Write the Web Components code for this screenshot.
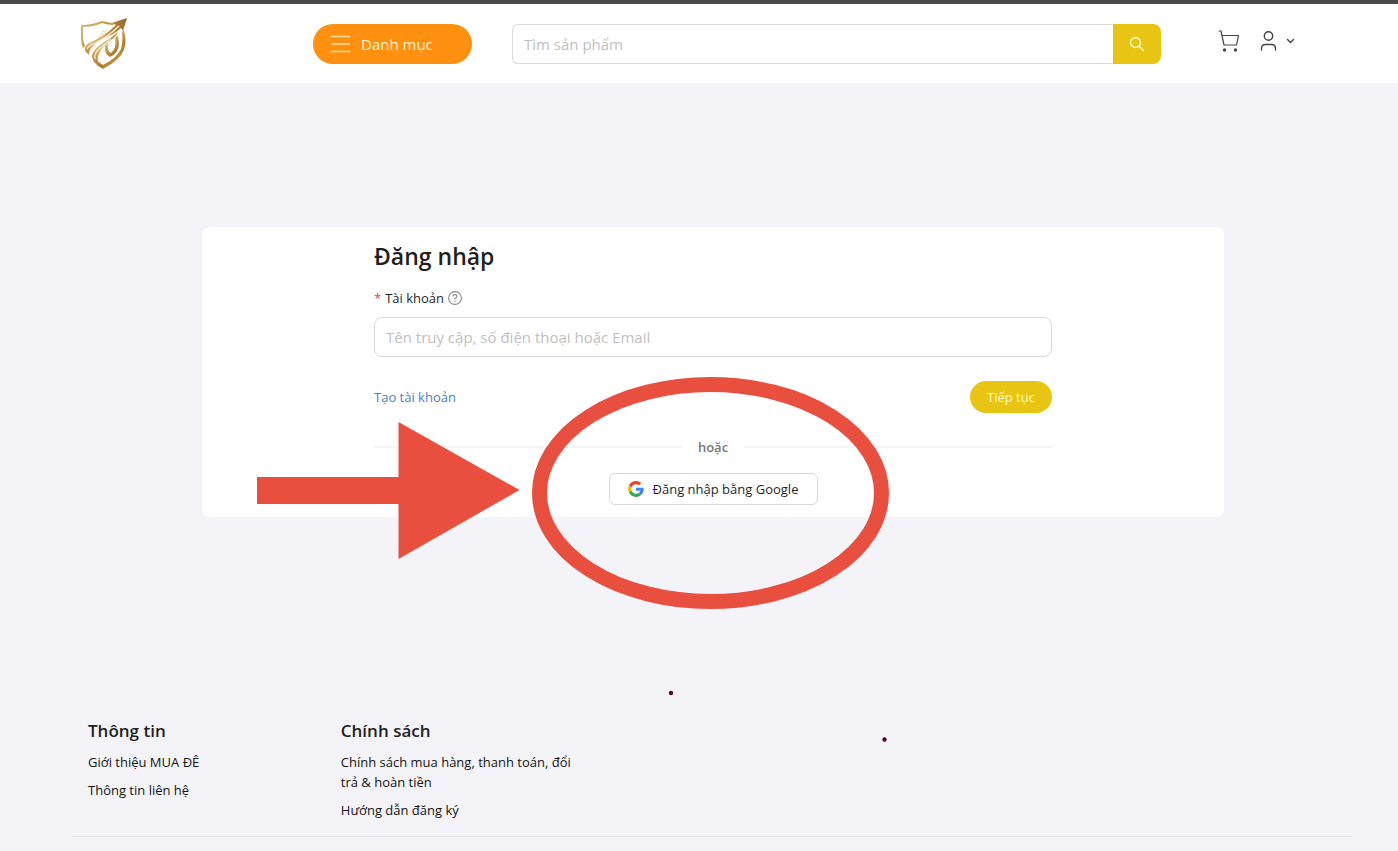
<!DOCTYPE html>
<html lang="vi">
<head>
  <meta charset="utf-8">
  <meta name="viewport" content="width=device-width, initial-scale=1">
  <title>Đăng nhập</title>
  <style>
    * { box-sizing: border-box; }
    body {
      --text: #1f1f1f;
      --border: #d9d9d9;
      --yellow: #e8c512;
      --mark: #e94f3f;
      margin: 0;
      min-height: 100vh;
      position: relative;
      overflow-x: hidden;
      display: flex;
      flex-direction: column;
      background: #f3f3f8;
      color: var(--text);
      font: 13px/20px "Open Sans", "Noto Sans", sans-serif;
    }
    main {
      padding: 144px 44px 0 72px;
      flex: 1;
    }
  </style>
</head>
<body>
  <shop-header></shop-header>
  <main>
    <login-card></login-card>
  </main>
  <shop-footer>
    <footer-column heading="Thông tin">
      <a href="#">Giới thiệu MUA ĐÊ</a>
      <a href="#">Thông tin liên hệ</a>
    </footer-column>
    <footer-column heading="Chính sách">
      <a href="#">Chính sách mua hàng, thanh toán, đổi trả &amp; hoàn tiền</a>
      <a href="#">Hướng dẫn đăng ký</a>
    </footer-column>
  </shop-footer>
  <guide-marks></guide-marks>

  <script>
    class ShopLogo extends HTMLElement {
      constructor() {
        super();
        const shadowRoot = this.attachShadow({ mode: 'open' });
        shadowRoot.innerHTML = `
          <style>
          :host { display: block; width: 48px; height: 54px; }
          svg { display: block; }
          </style>
          <svg width="48" height="54" viewBox="0 0 48 54" aria-hidden="true">
            <defs>
              <linearGradient id="gold" gradientUnits="userSpaceOnUse" x1="0" y1="8" x2="40" y2="50">
                <stop offset="0" stop-color="#d9bd80"/>
                <stop offset=".3" stop-color="#c4943f"/>
                <stop offset=".5" stop-color="#e2c486"/>
                <stop offset=".75" stop-color="#b07c2a"/>
                <stop offset="1" stop-color="#cfa458"/>
              </linearGradient>
              <linearGradient id="shaft" gradientUnits="userSpaceOnUse" x1="6" y1="44" x2="46" y2="2">
                <stop offset="0" stop-color="#a8752a"/>
                <stop offset=".3" stop-color="#dfbb70"/>
                <stop offset=".6" stop-color="#c59a4c"/>
                <stop offset="1" stop-color="#946420"/>
              </linearGradient>
            </defs>
            <g fill="url(#gold)">
              <path d="M1 8 Q12 8 22 4 Q29 6 36 6 L33 8 Q27 8 22 6 Q13 10 3 10 L3 21 Q3 25 5 29 L3 31 Q1 26 1 20Z"/>
              <path d="M42 15 L44 13 Q47 24 44 33 Q40 43 23 52 Q17 49 13 44 L15 41 Q19 46 23 48 Q37 41 41 32 Q43 25 42 15Z"/>
              <path d="M28 26 L25 29 Q24 37 30 40 Q39 36 39 26 L38 18 L35 21 Q37 31 31 36 Q27 34 28 26Z"/>
            </g>
            <g fill="url(#shaft)">
              <path d="M47 1 L43 14 L41 11 Q35 17 27 20 Q16 25 13 29 Q9 33 9 38 L5 34 Q4 28 11 25 Q22 21 36 8 L32 6Z"/>
              <path d="M38 15 Q30 22 23 26 Q13 32 12 39 Q12 44 19 48 Q16 41 20 35 Q22 30 29 25 Q36 20 38 15Z"/>
            </g>
            <path d="M7 32 Q9 28 15 26 Q28 20 39 9 M15 42 Q14 36 20 31 Q25 27 31 22" fill="none" stroke="#f9efcf" stroke-width="1.2"/>
            <path d="M22 14 h5 M20 17 h6 M18 20 h5" stroke="#e5d19e" stroke-width="1"/>
          </svg>
          `
      }
    }

    class SearchBox extends HTMLElement {
      constructor() {
        super();
        const shadowRoot = this.attachShadow({ mode: 'open' });
        shadowRoot.innerHTML = `
          <style>
          * { box-sizing: border-box; }
          :host { display: block; }
          form { display: flex; height: 40px; }
          input {
            flex: 1;
            min-width: 0;
            padding: 0 11px;
            border: 1px solid var(--border);
            border-right: 0;
            border-radius: 6px 0 0 6px;
            background: #fff;
            color: var(--text);
            font: inherit;
            font-size: 15px;
            outline: none;
          }
          input::placeholder { color: #bfbfbf; opacity: 1; }
          button {
            width: 48px;
            padding: 0;
            display: grid;
            place-items: center;
            border: 0;
            border-radius: 0 8px 8px 0;
            background: var(--yellow);
            cursor: pointer;
          }
          </style>
          <form>
            <input type="search" aria-label="Tìm sản phẩm" placeholder="Tìm sản phẩm">
            <button type="button" aria-label="Tìm">
              <svg width="16" height="16" viewBox="0 0 16 16" fill="none" stroke="#fffbd0" stroke-width="1.3" stroke-linecap="round" aria-hidden="true">
                <circle cx="6.5" cy="6.5" r="5"/>
                <path d="M10.3 10.3 L14.5 14.5"/>
              </svg>
            </button>
          </form>
          `
      }
    }

    class ShopHeader extends HTMLElement {
      constructor() {
        super();
        const shadowRoot = this.attachShadow({ mode: 'open' });
        shadowRoot.innerHTML = `
          <style>
          * { box-sizing: border-box; }
          :host { display: block; background: #fff; border-top: 4px solid #4a484a; }
          header {
            display: flex;
            align-items: center;
            min-height: 79px;
            padding: 0 103px 0 80px;
          }
          .category {
            display: flex;
            align-items: center;
            gap: 10px;
            width: 159px;
            height: 40px;
            margin: 0 40px 0 185px;
            padding: 0 18px;
            border: 0;
            border-radius: 20px;
            background: #ff9010;
            color: #fff3d0;
            font: inherit;
            font-size: 15px;
            cursor: pointer;
          }
          search-box { flex: 1; }
          nav { display: flex; align-items: center; gap: 20px; margin: -6px 0 0 57px; }
          nav a { display: flex; align-items: center; gap: 8px; color: #444; }
          </style>
          <header>
            <shop-logo></shop-logo>
            <button class="category" type="button">
              <svg width="20" height="18" viewBox="0 0 20 18" stroke="#ffdf9c" stroke-width="1.4" aria-hidden="true">
                <path d="M0 1.5 H19 M0 9 H19 M0 16.5 H19"/>
              </svg>
              Danh mục
            </button>
            <search-box></search-box>
            <nav>
              <a href="#" aria-label="Giỏ hàng">
                <svg width="22" height="22" viewBox="0 0 22 22" fill="none" stroke="currentColor" stroke-width="1.2" stroke-linecap="round" stroke-linejoin="round" aria-hidden="true">
                  <path d="M1 1 H3 L6 15 H18.5 L20.5 5.5 H4"/>
                  <circle cx="6.5" cy="20" r="1.1" fill="currentColor"/>
                  <circle cx="17.5" cy="20" r="1.1" fill="currentColor"/>
                </svg>
              </a>
              <a href="#" aria-label="Tài khoản">
                <svg width="18" height="20" viewBox="0 0 18 20" fill="none" stroke="currentColor" stroke-width="1.4" stroke-linecap="round" aria-hidden="true">
                  <circle cx="8.5" cy="5" r="4.2"/>
                  <path d="M1.5 19 V17.5 Q1.5 13.5 5.5 13.5 H11.5 Q15.5 13.5 15.5 17.5 V19"/>
                </svg>
                <svg width="9" height="6" viewBox="0 0 9 6" fill="none" stroke="currentColor" stroke-width="1.4" stroke-linecap="round" aria-hidden="true">
                  <path d="M1.5 1.5 L4.5 4.5 L7.5 1.5"/>
                </svg>
              </a>
            </nav>
          </header>
          `
      }
    }

    class LoginCard extends HTMLElement {
      constructor() {
        super();
        const shadowRoot = this.attachShadow({ mode: 'open' });
        shadowRoot.innerHTML = `
          <style>
          * { box-sizing: border-box; }
          :host {
            display: block;
            width: 80%;
            max-width: 1022px;
            margin: 0 auto;
            padding: 12px 24px;
            border-radius: 8px;
            background: #fff;
          }
          form { max-width: 678px; margin: 0 auto; }
          h1 { margin: 0 0 15px; font-size: 23px; line-height: 34px; font-weight: 600; }
          label { display: flex; align-items: center; height: 20px; margin-bottom: 9px; }
          .required { margin-right: 4px; color: #e0444a; }
          label svg { margin-left: 4px; }
          input {
            display: block;
            width: 100%;
            height: 40px;
            padding: 0 11px;
            border: 1px solid var(--border);
            border-radius: 8px;
            background: #fff;
            color: var(--text);
            font: inherit;
            font-size: 15px;
            outline: none;
          }
          input::placeholder { color: #bfbfbf; opacity: 1; }
          .actions {
            display: flex;
            align-items: center;
            justify-content: space-between;
            margin: 24px 0;
          }
          a { color: #4a80c8; text-decoration: none; }
          button {
            height: 32px;
            padding: 0 15px;
            font: inherit;
            cursor: pointer;
          }
          .next {
            width: 82px;
            border: 0;
            border-radius: 16px;
            background: var(--yellow);
            color: #fffbc8;
          }
          .divider {
            display: flex;
            align-items: center;
            gap: 16px;
            margin-bottom: 16px;
            color: #777;
            font-weight: 600;
          }
          .divider::before, .divider::after {
            content: "";
            flex: 1;
            border-top: 2px solid #f5f5f5;
          }
          .google {
            display: flex;
            align-items: center;
            justify-content: center;
            gap: 9px;
            min-width: 209px;
            margin: 0 auto;
            border: 1px solid var(--border);
            border-radius: 6px;
            background: #fff;
            color: var(--text);
          }
          </style>
          <form>
            <h1>Đăng nhập</h1>
            <label for="account">
              <span class="required">*</span>Tài khoản
              <svg width="14" height="14" viewBox="0 0 14 14" fill="none" stroke="#8c8c8c" stroke-width="1.1" aria-hidden="true">
                <circle cx="7" cy="7" r="6.4"/>
                <path d="M5 5.5 Q5 3.6 7 3.6 Q9 3.6 9 5.4 Q9 6.6 7 7.3 V8.5 M7 9.8 V11"/>
              </svg>
            </label>
            <input id="account" type="text" placeholder="Tên truy cập, số điện thoại hoặc Email">
            <div class="actions">
              <a href="#">Tạo tài khoản</a>
              <button class="next" type="button">Tiếp tục</button>
            </div>
            <div class="divider">hoặc</div>
            <button class="google" type="button">
              <svg width="16" height="16" viewBox="0 0 48 48" aria-hidden="true">
                <path fill="#ea4335" d="M24 9.5c3.54 0 6.71 1.22 9.21 3.6l6.85-6.85C35.9 2.38 30.47 0 24 0 14.62 0 6.51 5.38 2.56 13.22l7.98 6.19C12.43 13.72 17.74 9.5 24 9.5z"/>
                <path fill="#4285f4" d="M46.98 24.55c0-1.57-.15-3.09-.38-4.55H24v9.02h12.94c-.58 2.96-2.26 5.48-4.78 7.18l7.73 6c4.51-4.18 7.09-10.36 7.09-17.65z"/>
                <path fill="#fbbc05" d="M10.53 28.59c-.48-1.45-.76-2.99-.76-4.59s.27-3.14.76-4.59l-7.98-6.19C.92 16.46 0 20.12 0 24c0 3.88.92 7.54 2.56 10.78l7.97-6.19z"/>
                <path fill="#34a853" d="M24 48c6.48 0 11.93-2.13 15.89-5.81l-7.73-6c-2.15 1.45-4.92 2.3-8.16 2.3-6.26 0-11.57-4.22-13.47-9.91l-7.98 6.19C6.51 42.62 14.62 48 24 48z"/>
              </svg>
              Đăng nhập bằng Google
            </button>
          </form>
          `
      }
    }

    class FooterColumn extends HTMLElement {
      constructor() {
        super();
        const shadowRoot = this.attachShadow({ mode: 'open' });
        shadowRoot.innerHTML = `
          <style>
          :host { display: flex; flex-direction: column; gap: 8px; }
          h2 { margin: 0; font-size: 17px; line-height: 26px; font-weight: 600; }
          ::slotted(a) { color: #141414; text-decoration: none; }
          </style>
          <h2>${this.getAttribute('heading')}</h2>
          <slot></slot>
          `
      }
    }

    class ShopFooter extends HTMLElement {
      constructor() {
        super();
        const shadowRoot = this.attachShadow({ mode: 'open' });
        shadowRoot.innerHTML = `
          <style>
          :host { display: block; padding: 0 46px 14px 72px; }
          footer {
            display: grid;
            grid-template-columns: repeat(5, 1fr);
            gap: 16px;
            padding: 0 16px 16px;
            border-bottom: 1px solid #e4e4ea;
          }
          </style>
          <footer><slot></slot></footer>
          `
      }
    }

    // Hand-drawn pointer and ring laid over the page
    class GuideMarks extends HTMLElement {
      constructor() {
        super();
        const shadowRoot = this.attachShadow({ mode: 'open' });
        shadowRoot.innerHTML = `
          <style>
          :host { position: absolute; top: 377px; left: 257px; pointer-events: none; }
          svg { display: block; }
          </style>
          <svg width="634" height="368" viewBox="257 377 634 368" aria-hidden="true">
            <path fill="var(--mark)" d="M257 477 H398.5 V422 L519.5 490 L398.5 559 V504 H257Z"/>
            <ellipse cx="710.5" cy="493" rx="171" ry="108.5" fill="none" stroke="var(--mark)" stroke-width="15"/>
            <circle cx="671" cy="693" r="2.2" fill="#4d0a1e"/>
            <circle cx="884.5" cy="739.5" r="2.2" fill="#4d0a1e"/>
          </svg>
          `
      }
    }

    customElements.define('shop-logo', ShopLogo);
    customElements.define('search-box', SearchBox);
    customElements.define('shop-header', ShopHeader);
    customElements.define('login-card', LoginCard);
    customElements.define('footer-column', FooterColumn);
    customElements.define('shop-footer', ShopFooter);
    customElements.define('guide-marks', GuideMarks);
  </script>
</body>
</html>
